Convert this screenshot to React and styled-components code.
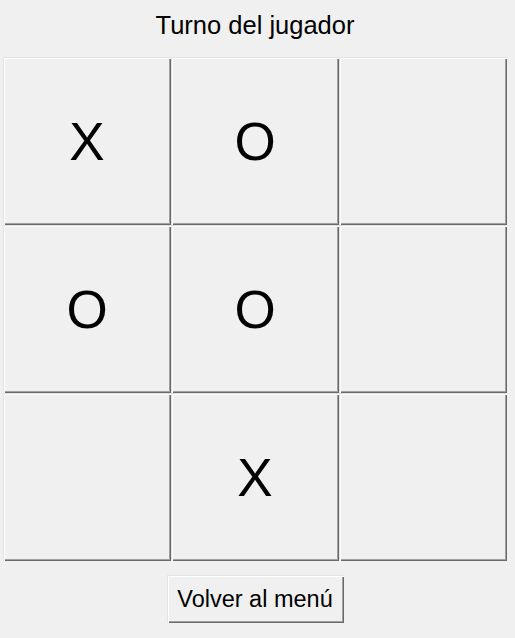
import React from 'react'
import styled, { createGlobalStyle } from 'styled-components'

const Global = createGlobalStyle`
  html, body {
    margin: 0;
    padding: 0;
    background: #f0f0f0;
  }
`

const Ventana = styled.div`
  width: 510px;
  height: 638px;
  display: flex;
  flex-direction: column;
  align-items: center;
  font-family: "Liberation Sans", Arial, sans-serif;
  color: #000;
`

const Titulo = styled.div`
  height: 50px;
  line-height: 50px;
  font-size: 25.5px;
  margin-bottom: 7px;
`

const Tablero = styled.div`
  display: grid;
  grid-template-columns: repeat(3, 168px);
  grid-template-rows: repeat(3, 168px);
`

const relieve = `
  background: #f0f0f0;
  border: none;
  box-shadow:
    inset 1px 1px 0 #e3e3e3,
    inset 2px 2px 0 #ffffff,
    inset -1px -1px 0 #696969,
    inset -2px -2px 0 #a0a0a0;
`

const Casilla = styled.button`
  ${relieve}
  padding: 0;
  margin: 0;
  font-family: "Liberation Sans", Arial, sans-serif;
  font-size: 53px;
  color: #000;
  display: flex;
  align-items: center;
  justify-content: center;
`

const BotonMenu = styled.button`
  ${relieve}
  margin-top: 14px;
  width: 177px;
  height: 48px;
  padding: 0;
  font-family: "Liberation Sans", Arial, sans-serif;
  font-size: 23.5px;
  color: #000;
`

const tablero = ['X', 'O', '', 'O', 'O', '', '', 'X', '']

const App = () => {
  return (
    <>
      <Global />
      <Ventana>
        <Titulo>Turno del jugador</Titulo>
        <Tablero>
          {tablero.map((valor, i) => (
            <Casilla key={i}>{valor}</Casilla>
          ))}
        </Tablero>
        <BotonMenu>Volver al menú</BotonMenu>
      </Ventana>
    </>
  )
}

export default App
